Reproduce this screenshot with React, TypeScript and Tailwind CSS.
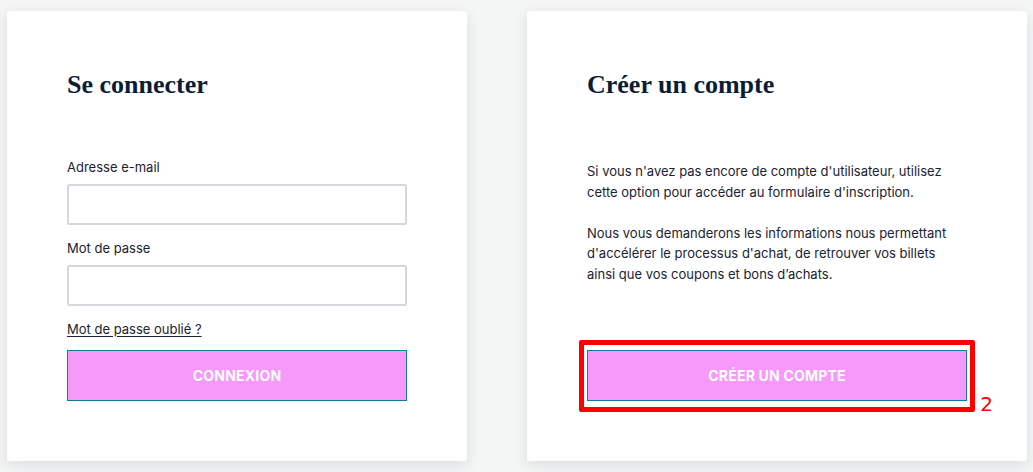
import React from 'react';

const serif = { fontFamily: '"Liberation Serif", serif' };

const App: React.FC = () => {
  return (
    <div className="min-h-[472px] w-[1033px] bg-[#f4f5f5] pl-[7px] pt-[11px] font-['Inter',sans-serif] text-[#1a2233]">
      <div className="flex gap-[60px]">
        {/* Login card */}
        <div className="flex h-[450px] w-[460px] flex-col rounded-[3px] bg-white px-[60px] pt-[60px] shadow-[0_4px_14px_rgba(40,60,80,0.12)]">
          <h2 style={serif} className="text-[26px] font-bold leading-[28px] text-[#0b1d35]">
            Se connecter
          </h2>

          <label htmlFor="email" className="mt-[60px] text-[13px] leading-[16px]">
            Adresse e-mail
          </label>
          <input
            id="email"
            type="email"
            className="mt-[9px] h-[41px] w-full rounded-[2px] border-2 border-[#d4d8dc] bg-white"
          />

          <label htmlFor="password" className="mt-[15px] text-[13px] leading-[16px]">
            Mot de passe
          </label>
          <input
            id="password"
            type="password"
            className="mt-[9px] h-[41px] w-full rounded-[2px] border-2 border-[#d4d8dc] bg-white"
          />

          <a href="#" className="mt-[15px] self-start text-[13px] leading-[16px] underline underline-offset-2">
            Mot de passe oublié ?
          </a>

          <button
            type="button"
            className="mt-[13px] h-[51px] w-full border border-[#0f7f98] bg-[#f799fb] text-[14px] font-bold tracking-[0.2px] text-white"
          >
            CONNEXION
          </button>
        </div>

        {/* Register card */}
        <div className="flex h-[450px] w-[500px] flex-col rounded-[3px] bg-white px-[60px] pt-[60px] shadow-[0_4px_14px_rgba(40,60,80,0.12)]">
          <h2 style={serif} className="text-[26px] font-bold leading-[28px] text-[#0b1d35]">
            Créer un compte
          </h2>

          <div className="mt-[62px] w-[380px] text-[13px] leading-[20.5px]">
            <p>
              Si vous n'avez pas encore de compte d'utilisateur, utilisez cette option pour accéder au formulaire
              d'inscription.
            </p>
            <p className="mt-[20.5px]">
              Nous vous demanderons les informations nous permettant d'accélérer le processus d'achat, de retrouver vos
              billets ainsi que vos coupons et bons d’achats.
            </p>
          </div>

          <div className="relative mt-[66px] w-[380px]">
            <button
              type="button"
              className="h-[51px] w-full border border-[#0f7f98] bg-[#f799fb] text-[14px] font-bold tracking-[0.2px] text-white"
            >
              CRÉER UN COMPTE
            </button>
            {/* annotation overlay */}
            <div className="pointer-events-none absolute -bottom-[11px] -left-[8px] -right-[8px] -top-[10px] rounded-[2px] border-[5px] border-[#ff0000]" />
            <span className="absolute -bottom-[14px] -right-[26px] font-['DejaVu_Sans',sans-serif] text-[20px] leading-[22px] text-[#ff0000]">
              2
            </span>
          </div>
        </div>
      </div>
    </div>
  );
};

export default App;
